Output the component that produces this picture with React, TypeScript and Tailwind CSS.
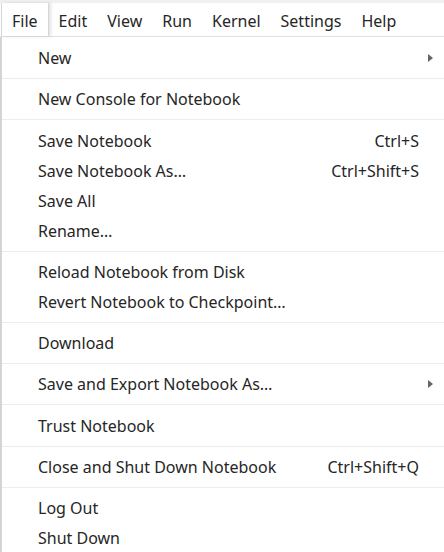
import React from "react";

type Item = { label: string; shortcut?: string; sub?: boolean };
const groups: Item[][] = [
  [{ label: "New", sub: true }],
  [{ label: "New Console for Notebook" }],
  [
    { label: "Save Notebook", shortcut: "Ctrl+S" },
    { label: "Save Notebook As…", shortcut: "Ctrl+Shift+S" },
    { label: "Save All" },
    { label: "Rename…" },
  ],
  [{ label: "Reload Notebook from Disk" }, { label: "Revert Notebook to Checkpoint…" }],
  [{ label: "Download" }],
  [{ label: "Save and Export Notebook As…", sub: true }],
  [{ label: "Trust Notebook" }],
  [{ label: "Close and Shut Down Notebook", shortcut: "Ctrl+Shift+Q" }],
  [{ label: "Log Out" }, { label: "Shut Down" }],
];

const menus = ["File", "Edit", "View", "Run", "Kernel", "Settings", "Help"];

export default function App() {
  return (
    <div
      className="w-[444px] h-[552px] overflow-hidden bg-white text-[#262626]"
      style={{ fontFamily: '"Noto Sans", "Noto Sans CJK KR", sans-serif' }}
    >
      <div className="h-[37px] border-t-[3px] border-t-[#f0f0f0] border-b border-b-[#e0e0e0] flex items-stretch pl-px">
        {menus.map((m, i) => (
          <div
            key={m}
            className={
              "px-[10px] pt-[2px] flex items-center text-[16px] " +
              (i === 0
                ? "bg-white border-l border-r border-[#d6d6d6] shadow-[2px_0_3px_rgba(0,0,0,0.12)] z-10"
                : "")
            }
          >
            {m}
          </div>
        ))}
      </div>
      <div className="border-l-2 border-l-[#d4d4d4] pt-[6px]">
        {groups.map((g, gi) => (
          <div key={gi}>
            {gi > 0 && (
              <div className="h-[11.25px] flex items-center">
                <div className="h-px w-full bg-[#ececec]" />
              </div>
            )}
            {g.map((it) => (
              <div key={it.label} className="h-[30px] flex items-center pl-[36px] pr-[25px] text-[16px]">
                <span className="flex-1">{it.label}</span>
                {it.shortcut && <span>{it.shortcut}</span>}
                {it.sub && (
                  <svg width="5" height="8" viewBox="0 0 5 8" className="mr-[-14px]">
                    <path d="M0 0 L5 4 L0 8 Z" fill="#666" />
                  </svg>
                )}
              </div>
            ))}
          </div>
        ))}
      </div>
    </div>
  );
}
